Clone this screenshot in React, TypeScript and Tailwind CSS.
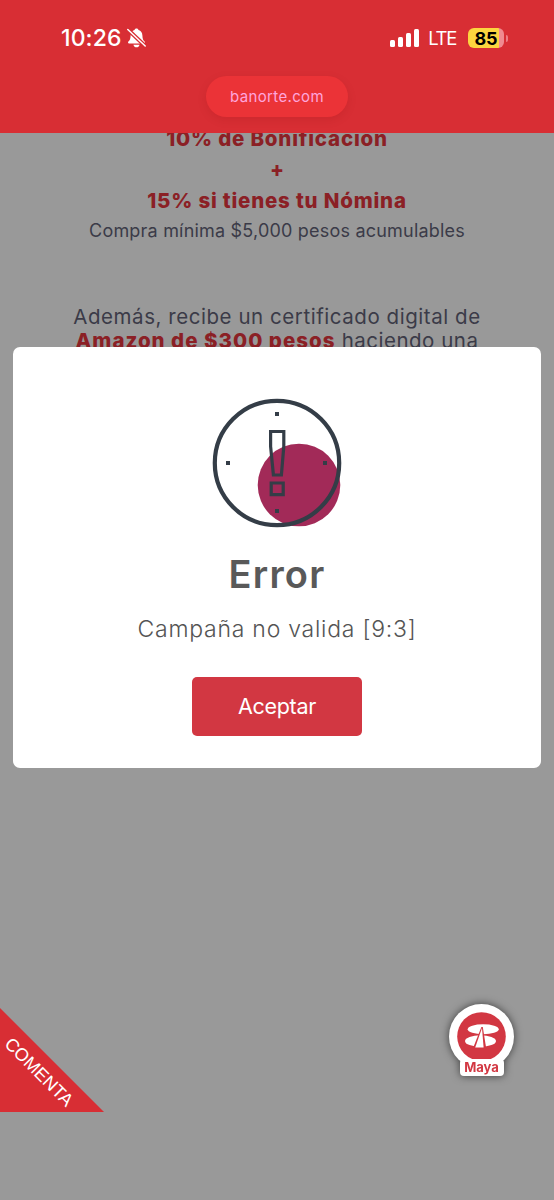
const signalBars = ['h-[7px]', 'h-[10px]', 'h-[14px]', 'h-[18px]']

function StatusBar() {
  return (
    <div className="flex h-[76px] items-start justify-between pt-[26px] pr-[46px] pl-[61px]">
      <div className="flex h-6 items-center text-white">
        <span className="text-[23px] leading-6 font-medium tracking-[0.1px]">10:26</span>
        <svg className="ml-[5px] h-5 w-[19px]" viewBox="0 0 19 20" fill="none">
          <path
            d="M9.5.5c1 0 1.900.7 2 1.500 2.500.8 3.800 2.900 3.900 5.400.1 3.200.6 4.600 2.200 6.200.6.6.5 1.900-.7 1.900H2.100c-1.200 0-1.300-1.300-.7-1.900C3 12 3.500 10.600 3.600 7.400c.1-2.500 1.400-4.600 3.900-5.400C7.600 1.200 8.500.5 9.500.5Z"
            fill="currentColor"
          />
          <path d="M6.400 16.700h6.200c-.4 1.600-1.600 2.600-3.100 2.600s-2.700-1-3.100-2.600Z" fill="currentColor" />
          <path d="M.5 1.200 18.500 18.200" stroke="#d82e34" strokeWidth="4" />
          <path d="M.8 1.500 18.200 18" stroke="currentColor" strokeWidth="1.500" strokeLinecap="round" />
        </svg>
      </div>
      <div className="flex h-6 items-center">
        <div className="flex h-[18px] items-end gap-[3px]">
          {signalBars.map((height) => (
            <span key={height} className={`w-[5px] rounded-[1.5px] bg-white ${height}`} />
          ))}
        </div>
        <span className="ml-[9px] text-[18.5px] leading-6 tracking-[-1.3px] text-white">LTE</span>
        <div className="ml-3 flex h-5 w-9 items-center justify-center rounded-[6px] bg-[linear-gradient(to_right,#fcd53f_85%,#f08a90_85%)] text-[18px] font-bold text-black">
          85
        </div>
        <span className="ml-[2px] h-[7px] w-[2px] rounded-r-full bg-[#ee7c84]" />
      </div>
    </div>
  )
}

function Header() {
  return (
    <header className="h-[133px] bg-[#d82e34]">
      <StatusBar />
      <div className="mx-auto flex h-[41px] w-[142px] items-center justify-center rounded-full bg-[#eb3337] pt-px text-[15px] tracking-[0.35px] text-[#ffa5dc] shadow-[0_3px_10px_rgba(120,0,0,0.12)]">
        banorte.com
      </div>
    </header>
  )
}

function PromoText() {
  return (
    <section className="h-[215px] overflow-hidden text-center whitespace-nowrap text-[#3b3b48]">
      <div className="-mt-[10px] text-[20.5px] leading-[31px] font-extrabold text-[#8b2025]">
        <p className="tracking-[0.8px]">10% de Bonificación</p>
        <p>+</p>
        <p className="tracking-[0.8px]">15% si tienes tu Nómina</p>
      </div>
      <p className="mt-[3px] text-[18px] leading-[24px] tracking-[0.2px]">Compra mínima $5,000 pesos acumulables</p>
      <div className="mt-[62px] text-[20.5px] leading-[24px]">
        <p className="tracking-[0.55px]">Además, recibe un certificado digital de</p>
        <p className="tracking-[0.5px]">
          <span className="font-extrabold tracking-[1px] text-[#8b2025]">Amazon de $300 pesos</span> haciendo una
        </p>
      </div>
    </section>
  )
}

function AlertIcon() {
  return (
    <svg className="h-[130px] w-[130px]" viewBox="0 0 130 130" fill="none">
      <circle cx="87" cy="87" r="41.300" fill="#a22a58" />
      <circle cx="65" cy="65" r="62.200" stroke="#343d47" strokeWidth="4.200" />
      <path d="M58.600 33.500h13.200v15L69.400 77h-8L58.600 48.500Z" stroke="#343d47" strokeWidth="3.200" />
      <path d="M59.200 85h12v11.600h-12Z" stroke="#343d47" strokeWidth="3.200" />
      <path d="M63 14h4v4h-4ZM63 111h4v4h-4ZM14 63h4v4h-4ZM111 63h4v4h-4Z" fill="#343d47" />
    </svg>
  )
}

function ErrorDialog() {
  return (
    <div
      role="alertdialog"
      className="absolute top-[347px] left-[13px] flex h-[421px] w-[528px] flex-col items-center rounded-[7px] bg-white pt-[51px] whitespace-nowrap"
    >
      <AlertIcon />
      <h1 className="mt-[22px] text-[38px] leading-[48px] font-semibold tracking-[1.2px] text-[#595959]">Error</h1>
      <p className="mt-[15px] text-[23px] leading-[32px] font-light tracking-[0.75px] text-[#545454]">
        Campaña no valida [9:3]
      </p>
      <button className="mt-[32px] h-[59px] w-[170px] rounded-[5px] bg-[#d23742] text-[21.500px] tracking-[-0.3px] text-white">
        Aceptar
      </button>
    </div>
  )
}

function CommentRibbon() {
  return (
    <button className="absolute top-[1008px] left-0 h-[104px] w-[104px] bg-[#d82e34] [clip-path:polygon(0_0,100%_100%,0_100%)]">
      <span className="absolute top-[52px] left-[-11px] w-[100px] rotate-45 text-center font-['Liberation_Sans',sans-serif] text-[18px] leading-6 text-white">
        COMENTA
      </span>
    </button>
  )
}

function MayaBadge() {
  return (
    <div className="absolute top-[1004px] left-[449px] flex w-[65px] flex-col items-center drop-shadow-[0_0_4px_rgba(0,0,0,0.6)]">
      <div className="flex h-[65px] w-[65px] items-center justify-center rounded-full bg-white">
        <svg className="h-[49px] w-[49px]" viewBox="0 0 49 49">
          <circle cx="24.500" cy="24.500" r="24.300" fill="#d23742" />
          <ellipse cx="26.200" cy="17.200" rx="15.500" ry="5" fill="#fff" />
          <ellipse cx="23.500" cy="29" rx="15.500" ry="5.800" fill="#fff" />
          <path d="M24.400 15 15.700 37h13.600L25.800 15Z" fill="#d23742" />
          <path d="m25 16-6.800 19.500h8.400Z" fill="#fff" />
        </svg>
      </div>
      <span className="-mt-[10px] flex h-[17px] w-[44px] items-center justify-center rounded-[4px] bg-white text-[13px] leading-none font-bold text-[#d23742]">
        Maya
      </span>
    </div>
  )
}

export default function App() {
  return (
    <div className="relative h-[1200px] w-[554px] overflow-hidden bg-[#999999] font-['Inter',sans-serif]">
      <Header />
      <PromoText />
      <ErrorDialog />
      <CommentRibbon />
      <MayaBadge />
    </div>
  )
}
